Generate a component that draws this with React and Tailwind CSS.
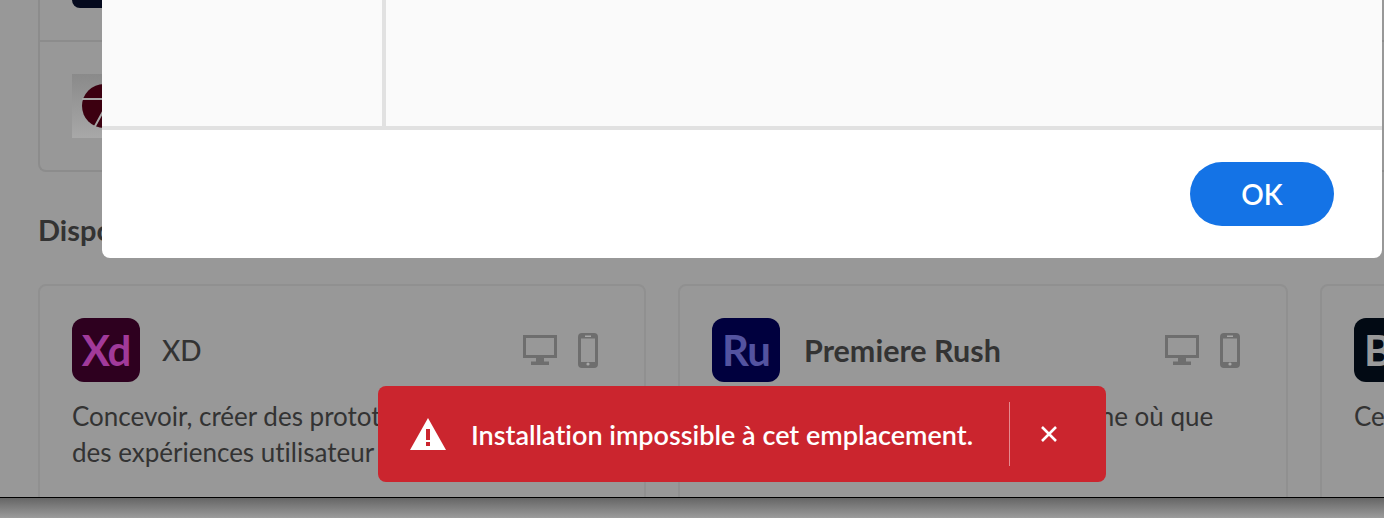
function Devices() {
  return (
    <div className="flex items-center gap-[21px] text-[#6e6e6e]">
      <svg width="34" height="30" viewBox="0 0 34 30" fill="none">
        <rect x="1.5" y="1.5" width="31" height="20" stroke="currentColor" strokeWidth="3" />
        <rect x="13" y="22" width="8" height="5" fill="currentColor" />
        <rect x="8" y="26.5" width="18" height="3.5" fill="currentColor" />
      </svg>
      <svg width="20" height="35" viewBox="0 0 20 35" fill="none">
        <rect x="1.5" y="1.5" width="17" height="32" rx="2.5" stroke="currentColor" strokeWidth="3" />
        <rect x="1.5" y="1.5" width="17" height="4" rx="1.5" fill="currentColor" />
        <rect x="1.5" y="29" width="17" height="4.5" rx="1.5" fill="currentColor" />
        <rect x="7" y="2.5" width="6" height="1.5" fill="#a8a8a8" />
        <circle cx="10" cy="31" r="1.6" fill="#a8a8a8" />
      </svg>
    </div>
  );
}

function AppCard({ code, codeClass, bg, name, nameClass, widthClass, lines, devices = true, iconGap }) {
  return (
    <div className={`shrink-0 ${widthClass} h-[240px] rounded-t-lg border-2 border-[#909090] pt-[32px] pl-[32px] pr-[46px]`}>
      <div className="flex items-center justify-between">
        <div className={`flex items-center ${iconGap}`}>
          <div className={`flex h-[64px] w-[68px] items-center justify-center rounded-xl ${bg}`}>
            <span className={`text-[42px] leading-none font-bold tracking-[-1px] ${codeClass}`}>{code}</span>
          </div>
          {name && <span className={`leading-none text-[#333333] ${nameClass}`}>{name}</span>}
        </div>
        {devices && <Devices />}
      </div>
      <p className="mt-[16px] text-[26px] leading-[36px] whitespace-nowrap text-[#333333]">
        {lines.map((l) => (
          <span key={l} className="block">{l}</span>
        ))}
      </p>
    </div>
  );
}

export default function App() {
  return (
    <div className="relative flex h-[518px] w-[1384px] flex-col overflow-hidden bg-[#989898] font-['Lato','Liberation_Sans',sans-serif] [font-variant-ligatures:none]">
      <main className="flex h-[497px] shrink-0 flex-col overflow-hidden pl-[38px]">
        <section className="flex h-[172px] w-[1346px] shrink-0 flex-col rounded-bl-lg border-b-2 border-l-2 border-[#8c8c8c]">
          <div className="h-[42px] shrink-0 border-b-2 border-[#8c8c8c] pl-[32px]">
            <div className="h-[8px] w-[60px] rounded-b-xl bg-[#050a1e]" />
          </div>
          <div className="flex flex-1 items-start pt-[32px] pl-[32px]">
            <div className="flex h-[64px] w-[64px] items-center justify-center bg-gradient-to-b from-[#8a8a8a] to-[#a8a8a8]">
              <svg width="44" height="44" viewBox="0 0 44 44">
                <circle cx="22" cy="22" r="22" fill="#3c0010" />
                <path d="M0 15H44M24 22L12 44" stroke="#a5a5a5" strokeWidth="2" fill="none" />
              </svg>
            </div>
          </div>
        </section>

        <h2 className="mt-[40px] text-[29px] leading-[36px] font-bold whitespace-nowrap text-[#333333]">Disponibles</h2>

        <div className="mt-[36px] flex gap-[32px]">
          <AppCard
            code="Xd"
            codeClass="text-[#a13a9a]"
            bg="bg-[#2e001f]"
            name="XD"
            nameClass="text-[28px] font-medium"
            widthClass="w-[608px]"
            iconGap="gap-[22px]"
            lines={["Concevoir, créer des prototypes et partager", "des expériences utilisateur"]}
          />
          <AppCard
            code="Ru"
            codeClass="text-[#5353a0]"
            bg="bg-[#00003e]"
            name="Premiere Rush"
            nameClass="text-[30.5px] font-bold"
            widthClass="w-[610px]"
            iconGap="gap-[24px]"
            lines={["Créer et partager des vidéos en ligne où que"]}
          />
          <AppCard
            code="Be"
            codeClass="text-[#9a9a9a]"
            bg="bg-[#020a14]"
            widthClass="w-[610px]"
            iconGap="gap-[24px]"
            devices={false}
            lines={["Ce"]}
          />
        </div>
      </main>

      <footer className="h-[21px] shrink-0 border-t border-black bg-gradient-to-b from-[#666666] to-[#9c9c9c]" />

      <div className="absolute top-0 left-[102px] flex h-[258px] w-[1280px] flex-col overflow-hidden rounded-b-lg bg-white">
        <div className="flex h-[130px] shrink-0 border-b-4 border-[#e1e1e1] bg-[#fafafa]">
          <div className="w-[280px] shrink-0 border-r-4 border-[#e1e1e1] box-content" />
          <div className="flex-1" />
        </div>
        <div className="flex flex-1 items-center justify-end pr-[48px]">
          <button className="flex h-[64px] w-[144px] items-center justify-center rounded-full bg-[#1473e6] text-[28px] font-semibold text-white">
            OK
          </button>
        </div>
      </div>

      <div className="absolute top-[386px] left-[378px] flex h-[96px] w-[728px] items-center rounded-lg bg-[#cb252e] pl-[32px] text-white">
        <svg width="36" height="32" viewBox="0 0 36 32" className="shrink-0">
          <path fillRule="evenodd" d="M18 0L36 32H0ZM16 11V22H20V11ZM16 24V28H20V24Z" fill="white" />
        </svg>
        <span className="ml-[25px] flex-1 text-[27px] leading-none font-semibold whitespace-nowrap">
          Installation impossible à cet emplacement.
        </span>
        <div className="mr-[48px] flex h-[64px] w-[49px] shrink-0 items-center justify-end border-l border-[#e58a8f]">
          <svg width="18" height="18" viewBox="0 0 18 18">
            <path d="M2 2L16 16M16 2L2 16" stroke="white" strokeWidth="2.6" />
          </svg>
        </div>
      </div>
    </div>
  );
}
